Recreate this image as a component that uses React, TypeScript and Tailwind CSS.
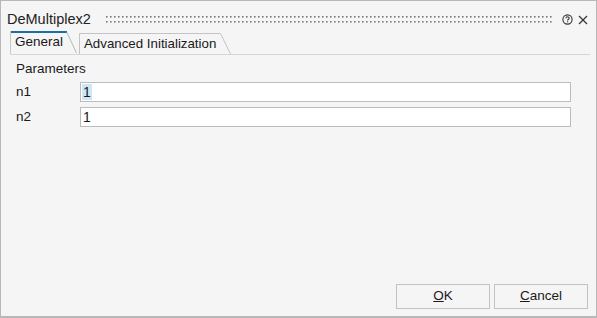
import React from "react";

const font = { fontFamily: '"Segoe UI", "Liberation Sans", Arial, sans-serif' };

function Grip() {
  return (
    <svg className="flex-1 h-[10px]" preserveAspectRatio="none">
      <defs>
        <pattern id="dots" x="0" y="0" width="4" height="5" patternUnits="userSpaceOnUse">
          <rect x="0" y="0" width="1.6" height="1.6" fill="#7a7a7a" />
        </pattern>
      </defs>
      <rect x="0" y="0" width="100%" height="7" fill="url(#dots)" />
    </svg>
  );
}

export default function App() {
  return (
    <div
      className="w-[597px] h-[318px] bg-[#f5f5f5] border border-[#b8b8b8] border-b-2 flex flex-col text-[#1a1a1a]"
      style={font}
    >
      {/* Title bar */}
      <div className="flex items-center h-[29px] pl-[6px] pr-[8px] pt-[8px]">
        <span className="text-[14.5px] leading-none text-[#222]">DeMultiplex2</span>
        <div className="flex-1 flex ml-[15px] mr-[8px] pt-[3px]">
          <Grip />
        </div>
        <svg width="11" height="11" viewBox="0 0 11 11" className="mr-[5px]">
          <circle cx="5.5" cy="5.5" r="4.6" fill="none" stroke="#333" strokeWidth="1.1" />
          <path d="M3.9 4.3 C3.9 3.2 4.7 2.8 5.5 2.8 C6.4 2.8 7.1 3.4 7.1 4.2 C7.1 5.2 5.6 5.3 5.6 6.4" fill="none" stroke="#333" strokeWidth="1.1" />
          <rect x="5.05" y="7.3" width="1.1" height="1.1" fill="#333" />
        </svg>
        <svg width="10" height="10" viewBox="0 0 10 10">
          <path d="M1 1 L9 9 M9 1 L1 9" stroke="#333" strokeWidth="1.2" />
        </svg>
      </div>

      {/* Tabs */}
      <div className="flex items-end h-[25px] ml-[9px] mr-[6px] border-b border-[#d6d6d6]">
        <div className="relative h-[23px] w-[68px]">
          <div className="absolute left-0 top-0 w-[57px] h-[2px] bg-[#1b6fa8]" />
          <div className="absolute left-0 top-0 bottom-0 w-px bg-[#c8c8c8]" />
          <svg className="absolute left-0 top-0" width="68" height="23">
            <path d="M57 1.5 L66.5 22" stroke="#b8b8b8" strokeWidth="1" fill="none" />
          </svg>
          <span className="absolute left-[5px] top-[4px] text-[13.5px] leading-none">General</span>
        </div>
        <div className="relative h-[21px] w-[154px] ml-[1px]">
          <svg className="absolute left-0 top-0" width="154" height="21">
            <path d="M0.5 21 L0.5 0.5 L141.5 0.5 L151.5 21" stroke="#c4c4c4" strokeWidth="1" fill="none" />
          </svg>
          <span className="absolute left-[5px] top-[4px] text-[13.3px] leading-none whitespace-nowrap">
            Advanced Initialization
          </span>
        </div>
      </div>

      {/* Content */}
      <div className="flex flex-col pl-[15px] pr-[25px] pt-[6px] flex-1">
        <div className="text-[13.5px] leading-[15px] mb-[6px]">Parameters</div>
        <div className="flex items-center h-[20px] mb-[5px]">
          <span className="w-[64px] text-[13.5px]">n1</span>
          <div className="flex-1 h-[20px] bg-white border border-[#bcbcbc] flex items-center pl-[1px]">
            <span className="bg-[#cce8f6] text-[14px] leading-[16px] px-[1px]">1</span>
          </div>
        </div>
        <div className="flex items-center h-[20px]">
          <span className="w-[64px] text-[13.5px]">n2</span>
          <div className="flex-1 h-[20px] bg-white border border-[#bcbcbc] flex items-center pl-[2px]">
            <span className="text-[14px] leading-[16px]">1</span>
          </div>
        </div>
        <div className="flex-1" />
        <div className="flex justify-end gap-[4px] mb-[7px] mr-[-17px]">
          <button className="w-[94px] h-[25px] border border-[#c2c2c2] bg-[#f5f5f5] text-[13.5px] flex items-center justify-center">
            <span><span className="underline">O</span>K</span>
          </button>
          <button className="w-[94px] h-[25px] border border-[#c2c2c2] bg-[#f5f5f5] text-[13.5px] flex items-center justify-center">
            <span><span className="underline">C</span>ancel</span>
          </button>
        </div>
      </div>
    </div>
  );
}
